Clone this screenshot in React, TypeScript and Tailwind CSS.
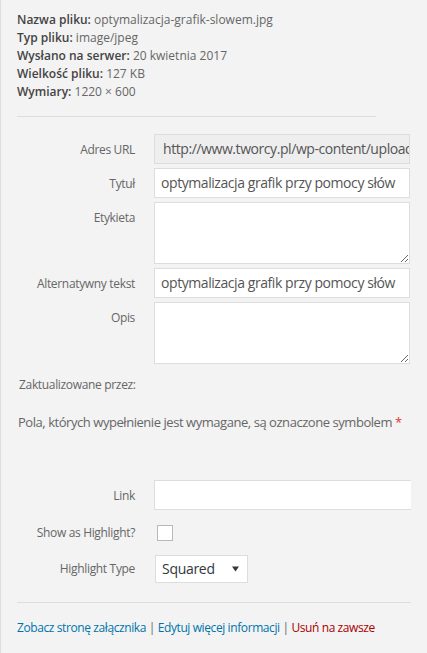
import React from "react";

const font = { fontFamily: '"Open Sans", "Noto Sans", sans-serif' };

function Label({ children }: { children: React.ReactNode }) {
  return (
    <div className="w-[118px] shrink-0 text-right text-[12px] leading-[18px] tracking-[-0.33px] text-[#666] pt-[7px]">
      {children}
    </div>
  );
}

const inputText =
  "text-[14px] leading-[28px] tracking-[-0.43px] text-[#555] whitespace-nowrap overflow-hidden";

export default function App() {
  return (
    <div
      className="w-[427px] h-[653px] bg-[#f3f3f3] border-l border-[#ddd] overflow-hidden pl-[16px]"
      style={font}
    >
      <div className="pt-[11px] text-[12px] leading-[18px] text-[#666]">
        <div>
          <span className="font-semibold text-[#444]">Nazwa pliku:</span> optymalizacja-grafik-slowem.jpg
        </div>
        <div>
          <span className="font-semibold text-[#444]">Typ pliku:</span> image/jpeg
        </div>
        <div>
          <span className="font-semibold text-[#444]">Wysłano na serwer:</span> 20 kwietnia 2017
        </div>
        <div>
          <span className="font-semibold text-[#444]">Wielkość pliku:</span> 127 KB
        </div>
        <div>
          <span className="font-semibold text-[#444]">Wymiary:</span> 1220 × 600
        </div>
      </div>
      <div className="mt-[15px] h-px w-[359px] bg-[#ddd]" />

      <div className="w-[394px] overflow-hidden">
        <div className="mt-[17px] flex flex-col gap-[4px]">
          <div className="flex gap-[19px]">
            <Label>Adres URL</Label>
            <div className={`w-[256px] h-[30px] border border-[#ddd] bg-[#eee] pl-[8px] tracking-[-0.5px] ${inputText}`}>
              http://www.tworcy.pl/wp-content/uploads/2017/04/optymalizacja-grafik-slowem.jpg
            </div>
          </div>
          <div className="flex gap-[19px]">
            <Label>Tytuł</Label>
            <div className={`w-[256px] h-[30px] border border-[#ddd] bg-white pl-[6px] ${inputText}`}>
              optymalizacja grafik przy pomocy słów
            </div>
          </div>
          <div className="flex gap-[19px]">
            <Label>Etykieta</Label>
            <textarea
              readOnly
              className="w-[256px] h-[62px] border border-[#ddd] bg-white outline-none"
            />
          </div>
          <div className="flex gap-[19px]">
            <Label>Alternatywny tekst</Label>
            <div className={`w-[256px] h-[30px] border border-[#ddd] bg-white pl-[6px] ${inputText}`}>
              optymalizacja grafik przy pomocy słów
            </div>
          </div>
          <div className="flex gap-[19px]">
            <Label>Opis</Label>
            <textarea
              readOnly
              className="w-[256px] h-[62px] border border-[#ddd] bg-white outline-none"
            />
          </div>
        </div>

        <div className="mt-[12px] pl-[2px] text-[12px] leading-[18px] tracking-[-0.33px] text-[#666]">
          Zaktualizowane przez:
        </div>

        <div className="mt-[19px] pl-[1px] text-[13px] leading-[18px] tracking-[-0.45px] text-[#666] whitespace-nowrap">
          Pola, których wypełnienie jest wymagane, są oznaczone symbolem{" "}
          <span className="text-[#dc3232]">*</span>
        </div>

        <div className="mt-[49px] flex gap-[19px]">
          <Label>Link</Label>
          <div className="w-[300px] h-[30px] shrink-0 border border-[#ddd] bg-white" />
        </div>

        <div className="mt-[14px] flex items-center gap-[22px]">
          <div className="w-[118px] shrink-0 text-right text-[12px] leading-[18px] tracking-[-0.33px] text-[#666]">
            Show as Highlight?
          </div>
          <div className="w-[16px] h-[16px] border border-[#b4b9be] bg-white" />
        </div>

        <div className="mt-[13px] flex items-center gap-[20px]">
          <div className="w-[118px] shrink-0 text-right text-[12px] leading-[18px] tracking-[-0.33px] text-[#666]">
            Highlight Type
          </div>
          <div className="w-[93px] h-[28px] border border-[#ddd] bg-white flex items-center justify-between pl-[6px] pr-[8px] pb-[1px] text-[14px] leading-[18px] tracking-[-0.3px] text-[#32373c]">
            <span>Squared</span>
            <svg width="7" height="6" viewBox="0 0 7 6">
              <path d="M0 0.5 L7 0.5 L3.5 5.5 Z" fill="#32373c" />
            </svg>
          </div>
        </div>

        <div className="mt-[19px] h-px w-[394px] bg-[#ddd]" />

        <div className="mt-[16px] text-[12px] leading-[18px] tracking-[-0.4px] whitespace-nowrap text-[#666]">
          <span className="text-[#0073aa]">Zobacz stronę załącznika</span>
          {" | "}
          <span className="text-[#0073aa]">Edytuj więcej informacji</span>
          {" | "}
          <span className="text-[#a00]">Usuń na zawsze</span>
        </div>
      </div>
    </div>
  );
}
